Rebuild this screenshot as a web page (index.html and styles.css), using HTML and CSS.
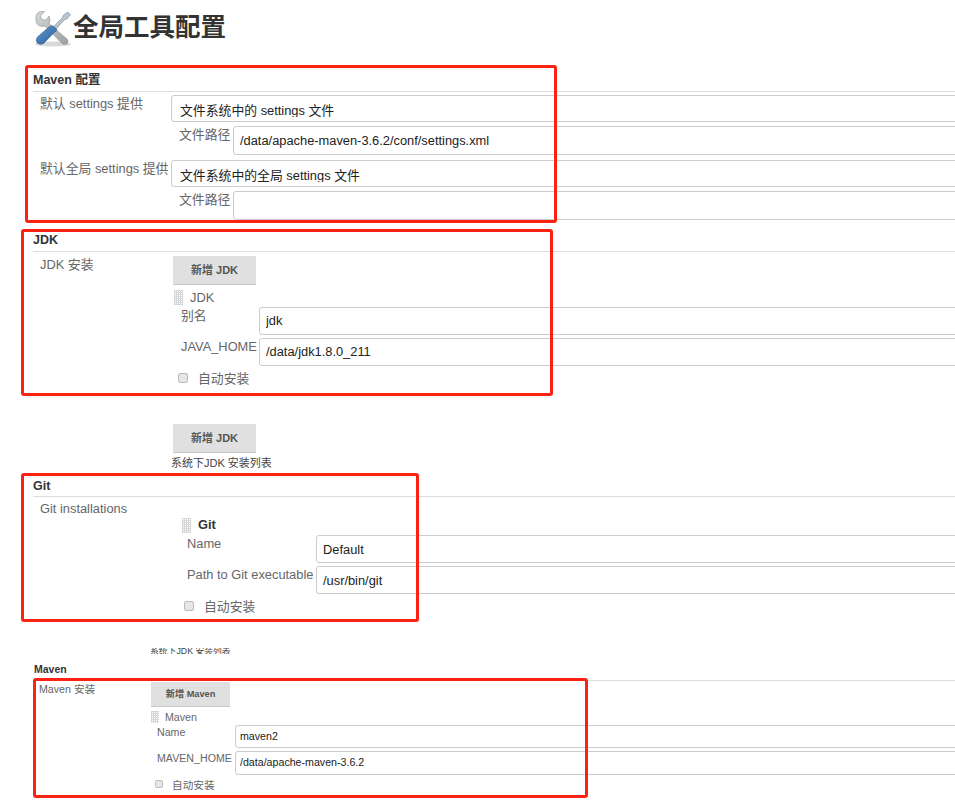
FILE: index.html
```html
<!DOCTYPE html>
<html lang="zh-CN">
<head>
<meta charset="utf-8">
<title>全局工具配置</title>
<link rel="stylesheet" href="styles.css">
</head>
<body>
<main class="page">
  <h1 class="title">
    <svg class="title-icon" viewBox="0 0 40 38" width="40" height="38" aria-hidden="true">
      <defs>
        <linearGradient id="steel" x1="0" y1="0" x2="1" y2="1">
          <stop offset="0" stop-color="#d5d8d8"/>
          <stop offset="1" stop-color="#9a9f9f"/>
        </linearGradient>
        <linearGradient id="blue" x1="0" y1="0" x2="1" y2="1">
          <stop offset="0" stop-color="#5f9bd0"/>
          <stop offset="1" stop-color="#2a5f9a"/>
        </linearGradient>
      </defs>
      <ellipse cx="20" cy="34" rx="18" ry="2.6" fill="#d8d8d8"/>
      <path d="M3 7 Q3 3 7 1.5 L11.500 1.500 L7.500 6 L9 9.500 L13 10 L16 6 Q18 10 16 13.500 L34 29 Q36.500 32 33.500 34 Q31 35.500 28.500 33 L12 16 Q6 17.500 3.500 13 Q2.500 10 3 7 Z" fill="url(#steel)" stroke="#8f9494" stroke-width=".6"/>
      <path d="M34.500 2 L37.500 4.500 L34 9 L31.800 9.500 L23 19 L20.500 16.800 L29.500 7.500 L30 5.500 Z" fill="#b9c4cc" stroke="#7f8f9c" stroke-width=".6"/>
      <path d="M20 16 L23.800 19.500 Q23.500 21.500 21.500 22 L11 33 Q7.500 35.500 4.500 33 Q2 30.500 4.500 27 L15.500 17.500 Q17.500 15.500 20 16 Z" fill="url(#blue)" stroke="#24507f" stroke-width=".6"/>
    </svg>
    <span>全局工具配置</span>
  </h1>

  <section class="sec sec-maven-config">
    <h2 class="sec-head">Maven 配置</h2>
    <div class="row row-first">
      <div class="lbl lbl-wide">默认 settings 提供</div>
      <div class="select"><span class="select-text">文件系统中的 settings 文件</span></div>
    </div>
    <div class="row row-sub">
      <div class="lbl lbl-path">文件路径</div>
      <input class="field field-tall" type="text" value="/data/apache-maven-3.6.2/conf/settings.xml">
    </div>
    <div class="row row-next">
      <div class="lbl lbl-wide">默认全局 settings 提供</div>
      <div class="select"><span class="select-text">文件系统中的全局 settings 文件</span></div>
    </div>
    <div class="row row-last">
      <div class="lbl lbl-path">文件路径</div>
      <input class="field field-tall" type="text" value="">
    </div>
    <div class="mark mark-a"></div>
  </section>

  <section class="sec sec-jdk">
    <h2 class="sec-head">JDK</h2>
    <div class="row row-install">
      <div class="lbl lbl-jdk">JDK 安装</div>
      <div class="install">
        <button class="btn" type="button">新增 JDK</button>
        <div class="item-head"><i class="grip"></i><span>JDK</span></div>
        <div class="row row-field">
          <div class="lbl lbl-home">别名</div>
          <input class="field field-raised" type="text" value="jdk">
        </div>
        <div class="row row-field row-gap">
          <div class="lbl lbl-home">JAVA_HOME</div>
          <input class="field field-raised" type="text" value="/data/jdk1.8.0_211">
        </div>
        <label class="auto"><input class="check" type="checkbox"><span>自动安装</span></label>
        <button class="btn btn-second" type="button">新增 JDK</button>
        <div class="note">系统下JDK 安装列表</div>
      </div>
    </div>
    <div class="mark mark-b"></div>
  </section>

  <section class="sec sec-git">
    <h2 class="sec-head sec-head-git">Git</h2>
    <div class="row row-install row-install-git">
      <div class="lbl lbl-git">Git installations</div>
    </div>
    <div class="git-item">
      <div class="item-head item-head-git"><i class="grip"></i><strong>Git</strong></div>
      <div class="row row-field">
        <div class="lbl lbl-gitfield">Name</div>
        <input class="field" type="text" value="Default">
      </div>
      <div class="row row-field row-gap">
        <div class="lbl lbl-gitfield">Path to Git executable</div>
        <input class="field" type="text" value="/usr/bin/git">
      </div>
      <label class="auto auto-git"><input class="check" type="checkbox"><span>自动安装</span></label>
    </div>
    <div class="mark mark-c"></div>
  </section>

  <div class="cut-note">系统下JDK 安装列表</div>

  <section class="sec sec-small">
    <h2 class="sec-head">Maven</h2>
    <div class="row row-small">
      <div class="lbl lbl-mvn">Maven 安装</div>
      <div class="install">
        <button class="btn btn-small" type="button">新增 Maven</button>
        <div class="item-head item-head-small"><i class="grip grip-small"></i><span>Maven</span></div>
        <div class="row row-field">
          <div class="lbl lbl-mvnfield">Name</div>
          <input class="field field-small" type="text" value="maven2">
        </div>
        <div class="row row-field row-gap">
          <div class="lbl lbl-mvnfield">MAVEN_HOME</div>
          <input class="field field-small" type="text" value="/data/apache-maven-3.6.2">
        </div>
        <label class="auto auto-small"><input class="check check-small" type="checkbox"><span>自动安装</span></label>
      </div>
    </div>
    <div class="mark mark-d"></div>
  </section>
</main>
</body>
</html>
```
FILE: styles.css
```css
* {
  box-sizing: border-box;
}

html,
body {
  margin: 0;
  padding: 0;
  background: #fff;
}

body {
  font-family: "Liberation Sans", "Noto Sans CJK SC", sans-serif;
  font-size: 12.850px;
  line-height: 16px;
  color: #666;
}

.page {
  width: 955px;
  height: 812px;
  overflow: hidden;
}

.title {
  display: flex;
  align-items: flex-start;
  margin: 0 0 0 33px;
  padding-top: 10px;
  height: 72px;
  font-size: 25.500px;
  line-height: 34px;
  font-weight: 700;
  color: #333;
}

.title-icon {
  flex: none;
}

.sec {
  position: relative;
  width: 1120px;
  margin-left: 33px;
}

.sec-head {
  margin: 0;
  height: 19px;
  border-bottom: 1px solid #ddd;
  font-size: 12.500px;
  line-height: 17px;
  font-weight: 700;
  color: #333;
  box-sizing: content-box;
}

.sec-head-git {
  line-height: 19px;
}

.row {
  display: flex;
  align-items: flex-start;
}

.lbl {
  flex: none;
  padding-top: 1px;
}

.lbl-wide {
  width: 131px;
  margin-left: 7px;
}

.lbl-path {
  width: 54px;
  margin-left: 146px;
}

.row-first {
  margin-top: 3px;
}

.row-sub {
  margin-top: 4px;
}

.row-next {
  margin-top: 5px;
}

.row-last {
  margin-top: 4px;
}

.select {
  flex: 1;
  height: 27px;
  padding: 7px 8px 0;
  border: 1px solid #ccc;
  border-radius: 3px;
  color: #222;
}

.select-text {
  display: block;
  height: 14px;
  overflow: hidden;
  white-space: nowrap;
}

.field {
  flex: 1;
  min-width: 0;
  height: 28px;
  margin: 0;
  padding: 0 6px;
  border: 1px solid #ccc;
  border-radius: 3px;
  background: #fff;
  font: 12.850px/16px "Liberation Sans", "Noto Sans CJK SC", sans-serif;
  color: #222;
  outline: none;
}

.field-tall {
  height: 29px;
}

.field-raised {
  padding-bottom: 2px;
}

.sec-jdk {
  margin-top: 12px;
}

.row-install {
  margin-top: 4px;
}

.row-install-git {
  margin-top: 3px;
}

.lbl-jdk {
  width: 133px;
  margin-left: 7px;
}

.install {
  flex: 1;
  min-width: 0;
}

.btn {
  display: block;
  width: 83px;
  height: 29px;
  padding: 0;
  border: 0;
  border-bottom: 1px solid #c8c8c8;
  background: #e0e0e0;
  font: 700 11px/16px "Liberation Sans", "Noto Sans CJK SC", sans-serif;
  color: #555;
}

.btn-second {
  margin-top: 37px;
}

.item-head {
  display: flex;
  align-items: center;
  gap: 7px;
  height: 15px;
  margin: 5px 0 2px 1px;
}

.grip {
  flex: none;
  width: 9px;
  height: 15px;
  background-image:
    linear-gradient(90deg, #ccc 1px, transparent 1px),
    linear-gradient(#ccc 1px, transparent 1px);
  background-size: 2px 2px;
  opacity: .8;
}

.row-field {
  margin-left: 8px;
}

.row-gap {
  margin-top: 3px;
}

.lbl-home {
  width: 78px;
}

.auto {
  display: flex;
  align-items: center;
  height: 16px;
  margin: 5px 0 0 5px;
}

.check {
  flex: none;
  width: 10px;
  height: 10px;
  margin: 0 10px 2px 0;
  appearance: none;
  border: 1px solid #bbb;
  border-radius: 2px;
  background: #e6e6e6;
}

.note {
  margin: 2px 0 0 -2px;
  font-size: 11px;
  line-height: 16px;
  color: #444;
}

.sec-git {
  margin-top: 6px;
}

.lbl-git {
  margin-left: 7px;
}

.git-item {
  margin: 0 0 0 149px;
}

.item-head-git {
  height: 16px;
  margin: 0 0 2px 0;
  gap: 7px;
  color: #333;
}

.row-field .lbl-gitfield {
  width: 129px;
}

.sec-git .row-field {
  margin-left: 5px;
}

.auto-git {
  margin: 5px 0 0 2px;
}

.cut-note {
  height: 6px;
  margin: 33px 0 0 150px;
  overflow: hidden;
  font-size: 8.800px;
  line-height: 6px;
  color: #444;
}

.sec-small {
  margin-top: 9px;
  font-size: 10.650px;
  line-height: 14px;
}

.sec-small .lbl {
  padding-top: 0;
}

.sec-small .sec-head {
  height: 17px;
  padding-left: 1px;
  font-size: 10.500px;
  line-height: 13px;
}

.row-small {
  margin-top: 1px;
}

.lbl-mvn {
  width: 112px;
  margin-left: 6px;
}

.btn-small {
  width: 79px;
  height: 25px;
  font-size: 9.200px;
}

.item-head-small {
  height: 12px;
  gap: 6px;
  margin: 4px 0 2px 0;
}

.grip-small {
  width: 8px;
  height: 12px;
}

.sec-small .row-field {
  margin-left: 6px;
}

.lbl-mvnfield {
  width: 78px;
}

.field-small {
  height: 23px;
  padding: 0 4px 2px;
  font-size: 10.650px;
}

.sec-small .row-gap .field-small {
  height: 24px;
}

.auto-small {
  height: 14px;
  margin: 3px 0 0 4px;
}

.check-small {
  width: 8px;
  height: 8px;
  margin-right: 9px;
}

.mark {
  position: absolute;
  border: 3px solid #fb2113;
  border-radius: 3px;
  pointer-events: none;
}

.mark-a {
  left: -8px;
  top: -7px;
  width: 532px;
  height: 158px;
}

.mark-b {
  left: -12px;
  top: -3px;
  width: 532px;
  height: 167px;
}

.mark-c {
  left: -12px;
  top: -4px;
  width: 398px;
  height: 149px;
}

.mark-d {
  left: 0;
  top: 15px;
  width: 555px;
  height: 120px;
}
```
